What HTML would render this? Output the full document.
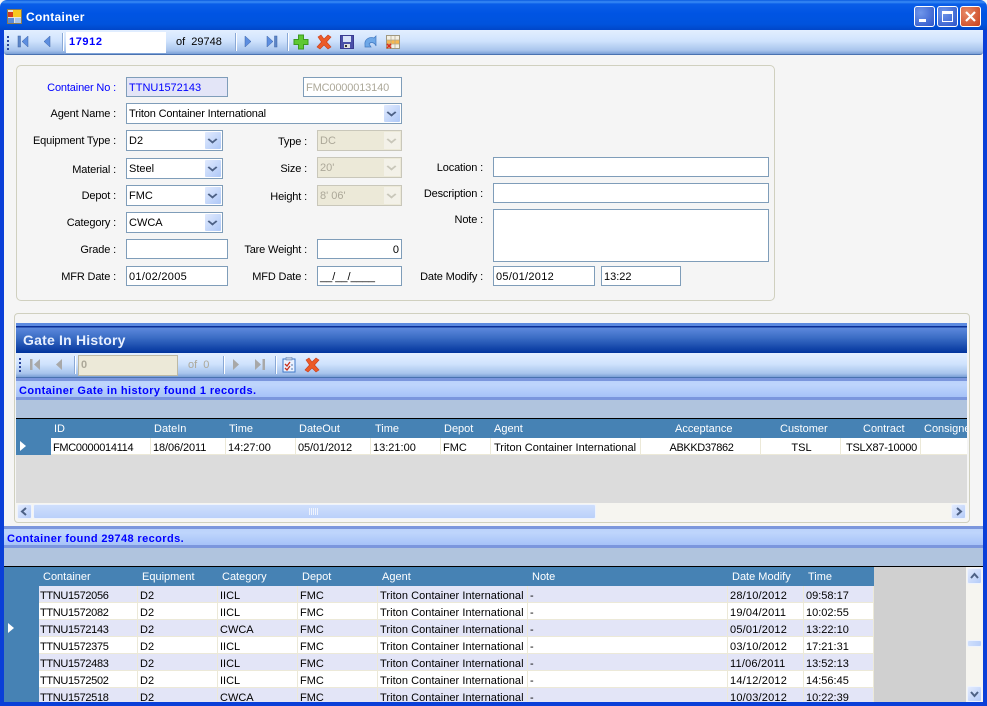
<!DOCTYPE html>
<html><head><meta charset="utf-8"><title>Container</title>
<style>
html,body{margin:0;padding:0;background:#f5f5f5}
body{width:987px;height:706px;position:relative;overflow:hidden;font:11px "Liberation Sans",sans-serif;color:#000}
div,span,svg{position:absolute;box-sizing:border-box}
.t{white-space:nowrap;line-height:14px;height:14px}
.l{white-space:nowrap;line-height:14px;height:14px;text-align:right;width:130px;margin-top:1px;letter-spacing:-.15px}
.i{background:#fff;border:1px solid #7f9db9;line-height:17px;padding:2px 0 0 2px;white-space:nowrap;overflow:hidden;height:20px}
.c{background:#fff;border:1px solid #7f9db9;line-height:17px;padding:2px 0 0 2px;white-space:nowrap;height:21px}
.c b{position:absolute;right:1px;top:1px;width:16px;height:17px;background:linear-gradient(135deg,#e1eafe,#aec8f7);border-radius:1px;display:block}
.c b:after,.d b:after{content:"";position:absolute;left:4px;top:4px;width:5px;height:5px;border-right:2px solid #4d6185;border-bottom:2px solid #4d6185;transform:scale(1,.8) rotate(45deg)}
.d{background:#ece9d8;border:1px solid #c9c7ba;color:#aca899;line-height:17px;padding-left:2px;height:21px}
.d u{position:absolute;left:2px;top:2px;right:19px;bottom:2px;background:#ece9d8;text-decoration:none}
.d b{position:absolute;right:1px;top:1px;width:16px;height:17px;background:#f3f1e8;display:block}
.d b:after{border-color:#c9c7ba}
.tb{background:linear-gradient(#e3efff 0%,#d0e3fd 45%,#a8c4ec 85%,#7a9fd6 100%)}
.st{background:linear-gradient(#bcd3fb,#bed5fc 25%,#a6c2f8 100%);border-top:3px solid #7b96dd;border-bottom:3px solid #7b96dd;color:#0000ff;font-weight:bold;line-height:15px;padding:3px 0 0 3px;letter-spacing:.4px;white-space:nowrap}
.sep{width:1px;height:18px;background:#8aa9d6;border-right:1px solid #fff;box-sizing:content-box}
.grip{width:2px;height:2px;background:#27419a;box-shadow:0 4px #27419a,0 8px #27419a,0 12px #27419a,0 -0 #27419a}
.h{color:#fff;white-space:nowrap;line-height:14px;margin-top:1px}
.cell{white-space:nowrap;overflow:hidden;line-height:20px;height:17px;border-right:1px solid #ece9d8;border-bottom:1px solid #ece9d8;padding-left:2px}
.id{letter-spacing:-.33px;padding-left:1px}
.sb{background:linear-gradient(135deg,#e3ebfe,#b4cbf8);border:1px solid #eef3fd;border-radius:2px}
</style></head><body>

<!-- Window frame -->
<div style="left:0;top:0;width:987px;height:30px;background:linear-gradient(#0a5ae0 0,#3b8cf5 2px,#0a5ee8 4px,#0054e3 14px,#0053dd 24px,#0046c8 30px);border-radius:7px 7px 0 0"></div>
<div style="left:0;top:30px;width:4px;height:676px;background:#0a3fd8"></div>
<div style="left:983px;top:30px;width:4px;height:676px;background:#0a3fd8"></div>
<div style="left:0;top:702px;width:987px;height:4px;background:#0a3fd8"></div>

<svg style="left:7px;top:9px" width="15" height="15" viewBox="0 0 15 15"><rect x=".5" y=".5" width="14" height="14" fill="#e8e4d8" stroke="#8a7a50"/><rect x="1" y="3" width="5" height="5" fill="#d63c1c"/><rect x="6" y="1" width="8" height="7" fill="#f8c820"/><rect x="1" y="9" width="6" height="5" fill="#5a8ad8"/><rect x="8" y="9" width="6" height="5" fill="#a8c4ec"/></svg>
<div class="t" style="left:26px;top:10px;color:#fff;font-weight:bold;font-size:12px;letter-spacing:.3px">Container</div>

<!-- Window buttons -->
<div style="left:914px;top:6px;width:21px;height:21px;border:1px solid #fff;border-radius:3px;background:radial-gradient(circle at 30% 30%,#6f96ea,#2c54c8)"></div>
<div style="left:919px;top:19px;width:7px;height:3px;background:#fff"></div>
<div style="left:937px;top:6px;width:21px;height:21px;border:1px solid #fff;border-radius:3px;background:radial-gradient(circle at 30% 30%,#6f96ea,#2c54c8)"></div>
<div style="left:942px;top:11px;width:11px;height:11px;border:1px solid #fff;border-top-width:3px"></div>
<div style="left:960px;top:6px;width:21px;height:21px;border:1px solid #fff;border-radius:3px;background:radial-gradient(circle at 30% 30%,#e88a68,#c8401c)"></div>
<svg style="left:964px;top:10px" width="13" height="13" viewBox="0 0 13 13"><path d="M2 2L11 11M11 2L2 11" stroke="#fff" stroke-width="2.2"/></svg>

<!-- Main toolbar -->
<div class="tb" style="left:4px;top:30px;width:979px;height:25px;border-bottom:1px solid #4a72b0;border-radius:0 0 3px 3px"></div>
<div class="grip" style="left:7px;top:36px"></div>
<svg style="left:17px;top:35px" width="14" height="14" viewBox="0 0 14 14"><rect x="1" y="1" width="2.5" height="11" fill="#5d86c8" stroke="#3d62a4" stroke-width=".5"/><path d="M11 1V12L5 6.5Z" fill="#5d8ee0" stroke="#3d62a4" stroke-width=".5"/></svg>
<svg style="left:41px;top:35px" width="12" height="14" viewBox="0 0 12 14"><path d="M9 1V12L3 6.5Z" fill="#5d8ee0" stroke="#3d62a4" stroke-width=".5"/></svg>
<div class="sep" style="left:62px;top:33px"></div>
<div style="left:66px;top:32px;width:100px;height:21px;background:#fff"></div>
<div class="t" style="left:69px;top:35px;color:#0000ff;font-weight:bold;letter-spacing:.6px">17912</div>
<div class="t" style="left:176px;top:35px">of&nbsp; 29748</div>
<div class="sep" style="left:235px;top:33px"></div>
<svg style="left:243px;top:35px" width="12" height="14" viewBox="0 0 12 14"><path d="M2 1V12L8 6.5Z" fill="#5d8ee0" stroke="#3d62a4" stroke-width=".5"/></svg>
<svg style="left:266px;top:35px" width="14" height="14" viewBox="0 0 14 14"><path d="M1 1V12L7 6.5Z" fill="#5d8ee0" stroke="#3d62a4" stroke-width=".5"/><rect x="8.5" y="1" width="2.5" height="11" fill="#5d86c8" stroke="#3d62a4" stroke-width=".5"/></svg>
<div class="sep" style="left:287px;top:33px"></div>
<svg style="left:293px;top:34px" width="16" height="16" viewBox="0 0 16 16"><path d="M5.5 1H10.5V5.5H15V10.5H10.5V15H5.5V10.5H1V5.5H5.5Z" fill="#5ec832" stroke="#3c9a20"/></svg>
<svg style="left:316px;top:34px" width="16" height="16" viewBox="0 0 16 16"><path d="M2 3L5 1L8 5L12 1L15 3L10.5 8L15 13L12 15L8 11L4 15L1 13L5.5 8Z" fill="#ec5a28" stroke="#c83c18" stroke-width=".6"/></svg>
<svg style="left:340px;top:35px" width="14" height="14" viewBox="0 0 14 14"><rect x=".5" y=".5" width="13" height="13" fill="#4a50a8" stroke="#3a3a90"/><rect x="3" y="1" width="8" height="6" fill="#d8e2f8"/><rect x="4" y="9" width="6" height="4" fill="#e0e0e0"/><rect x="5" y="10" width="2" height="2" fill="#333"/></svg>
<svg style="left:362px;top:34px" width="16" height="16" viewBox="0 0 16 16"><path d="M3 11C2 6 7 2 12 4L14 2V12C13 9 9 7 7 10L9 13H3Z" fill="#6ea8e8" stroke="#4078c0" stroke-width=".7"/></svg>
<svg style="left:386px;top:35px" width="14" height="14" viewBox="0 0 14 14"><rect x=".5" y=".5" width="13" height="13" fill="#f4f0e4" stroke="#a09880"/><rect x="1" y="5" width="12" height="4" fill="#f8b850"/><path d="M5 1V13M9 1V13M1 5H13M1 9H13" stroke="#b0a890" stroke-width=".7"/><path d="M1 9L5 13M5 9L1 13" stroke="#d8301c" stroke-width="1.6"/></svg>

<!-- Form group -->
<div style="left:16px;top:65px;width:759px;height:236px;border:1px solid #d0d0bf;border-radius:5px;background:#f5f5f5"></div>

<div class="l" style="left:-14px;top:80px;color:#0000ff">Container No :</div>
<div class="i" style="left:126px;top:77px;width:102px;background:#e3e5f7;color:#0000ff">TTNU1572143</div>
<div class="i" style="left:303px;top:77px;width:99px;color:#aca899;letter-spacing:-.15px">FMC0000013140</div>

<div class="l" style="left:-14px;top:106px">Agent Name :</div>
<div class="c" style="left:126px;top:103px;width:276px;letter-spacing:-.17px">Triton Container International<b></b></div>

<div class="l" style="left:-14px;top:133px">Equipment Type :</div>
<div class="c" style="left:126px;top:130px;width:97px">D2<b></b></div>
<div class="l" style="left:-14px;top:162px">Material :</div>
<div class="c" style="left:126px;top:158px;width:97px">Steel<b></b></div>
<div class="l" style="left:-14px;top:188px">Depot :</div>
<div class="c" style="left:126px;top:185px;width:97px">FMC<b></b></div>
<div class="l" style="left:-14px;top:215px">Category :</div>
<div class="c" style="left:126px;top:212px;width:97px">CWCA<b></b></div>
<div class="l" style="left:-14px;top:242px">Grade :</div>
<div class="i" style="left:126px;top:239px;width:102px"></div>
<div class="l" style="left:-14px;top:269px">MFR Date :</div>
<div class="i" style="left:126px;top:266px;width:102px;letter-spacing:.3px">01/02/2005</div>

<div class="l" style="left:177px;top:134px">Type :</div>
<div class="d" style="left:317px;top:130px;width:85px"><u>DC</u><b></b></div>
<div class="l" style="left:177px;top:161px">Size :</div>
<div class="d" style="left:317px;top:157px;width:85px"><u>20'</u><b></b></div>
<div class="l" style="left:177px;top:189px">Height :</div>
<div class="d" style="left:317px;top:185px;width:85px"><u>8' 06'</u><b></b></div>
<div class="l" style="left:177px;top:242px">Tare Weight :</div>
<div class="i" style="left:317px;top:239px;width:85px;text-align:right;padding-right:2px">0</div>
<div class="l" style="left:177px;top:269px">MFD Date :</div>
<div class="i" style="left:317px;top:266px;width:85px">__/__/____</div>

<div class="l" style="left:353px;top:160px">Location :</div>
<div class="i" style="left:493px;top:157px;width:276px"></div>
<div class="l" style="left:353px;top:186px">Description :</div>
<div class="i" style="left:493px;top:183px;width:276px"></div>
<div class="l" style="left:353px;top:212px">Note :</div>
<div class="i" style="left:493px;top:209px;width:276px;height:53px"></div>
<div class="l" style="left:353px;top:269px">Date Modify :</div>
<div class="i" style="left:493px;top:266px;width:102px;letter-spacing:.3px">05/01/2012</div>
<div class="i" style="left:601px;top:266px;width:80px">13:22</div>

<!-- Gate In History group -->
<div style="left:14px;top:313px;width:956px;height:210px;border:1px solid #d0d0bf;border-radius:4px;background:#f5f5f5"></div>
<div style="left:16px;top:323px;width:951px;height:30px;background:linear-gradient(#5c8ae0 0,#5c8ae0 3px,#0a2f96 3px,#0a2f96 4px,#5c88dc 5px,#3a6cc4 15px,#0d3fa4 27px,#00339c 30px)"></div>
<div class="t" style="left:23px;top:332px;color:#e8f0ff;font-size:14px;font-weight:bold;height:16px;line-height:16px;letter-spacing:.2px">Gate In History</div>
<div class="tb" style="left:16px;top:353px;width:951px;height:25px;border-bottom:1px solid #4a72b0"></div>
<div class="grip" style="left:19px;top:358px"></div>
<svg style="left:29px;top:358px" width="14" height="14" viewBox="0 0 14 14"><rect x="1" y="1" width="2.5" height="11" fill="#a8a8a8"/><path d="M11 1V12L5 6.5Z" fill="#a8a8a8"/></svg>
<svg style="left:53px;top:358px" width="12" height="14" viewBox="0 0 12 14"><path d="M9 1V12L3 6.5Z" fill="#a8a8a8"/></svg>
<div class="sep" style="left:74px;top:356px"></div>
<div style="left:78px;top:355px;width:100px;height:21px;background:#ece9d8;border:1px solid #bdb9a4"></div>
<div class="t" style="left:81px;top:358px;color:#aca899;font-weight:bold">0</div>
<div class="t" style="left:188px;top:358px;color:#aca899">of&nbsp; 0</div>
<div class="sep" style="left:223px;top:356px"></div>
<svg style="left:231px;top:358px" width="12" height="14" viewBox="0 0 12 14"><path d="M2 1V12L8 6.5Z" fill="#a8a8a8"/></svg>
<svg style="left:254px;top:358px" width="14" height="14" viewBox="0 0 14 14"><path d="M1 1V12L7 6.5Z" fill="#a8a8a8"/><rect x="8.5" y="1" width="2.5" height="11" fill="#a8a8a8"/></svg>
<div class="sep" style="left:275px;top:356px"></div>
<svg style="left:282px;top:357px" width="14" height="16" viewBox="0 0 14 16"><rect x="1" y="2" width="12" height="13" fill="#eaf2ff" stroke="#3f78c8"/><rect x="4" y="0" width="6" height="3" fill="#b8c8e0" stroke="#5878a8" stroke-width=".5"/><path d="M3 7L5 9L8 5M3 11L5 13L8 9" fill="none" stroke="#c8301c" stroke-width="1.3"/><path d="M9 8H11M9 12H11" stroke="#5878a8"/></svg>
<svg style="left:304px;top:357px" width="16" height="16" viewBox="0 0 16 16"><path d="M2 3L5 1L8 5L12 1L15 3L10.5 8L15 13L12 15L8 11L4 15L1 13L5.5 8Z" fill="#ec5a28" stroke="#c83c18" stroke-width=".6"/></svg>

<div class="st" style="left:16px;top:378px;width:951px;height:22px">Container Gate in history found 1 records.</div>
<div style="left:16px;top:400px;width:951px;height:18px;background:#b0c4de"></div>
<div style="left:16px;top:418px;width:951px;height:1px;background:#000"></div>
<div style="left:16px;top:419px;width:951px;height:19px;background:#4682b4;overflow:hidden">
<span class="h" style="left:38px;top:2px">ID</span>
<span class="h" style="left:138px;top:2px">DateIn</span>
<span class="h" style="left:213px;top:2px">Time</span>
<span class="h" style="left:283px;top:2px">DateOut</span>
<span class="h" style="left:359px;top:2px">Time</span>
<span class="h" style="left:428px;top:2px">Depot</span>
<span class="h" style="left:478px;top:2px">Agent</span>
<span class="h" style="left:659px;top:2px">Acceptance</span>
<span class="h" style="left:764px;top:2px">Customer</span>
<span class="h" style="left:847px;top:2px">Contract</span>
<span class="h" style="left:908px;top:2px">Consignee</span>
</div>
<div style="left:16px;top:438px;width:35px;height:17px;background:#4682b4"></div>
<svg style="left:20px;top:441px" width="6" height="10" viewBox="0 0 6 10"><path d="M0 0L6 5L0 10Z" fill="#fff"/></svg>
<div style="left:51px;top:438px;width:916px;height:17px;background:#fff;overflow:hidden">
<div class="cell" style="left:0;top:0;width:100px;letter-spacing:-.3px">FMC0000014114</div>
<div class="cell" style="left:100px;top:0;width:75px;letter-spacing:-.1px">18/06/2011</div>
<div class="cell" style="left:175px;top:0;width:70px">14:27:00</div>
<div class="cell" style="left:245px;top:0;width:75px;letter-spacing:-.1px">05/01/2012</div>
<div class="cell" style="left:320px;top:0;width:70px">13:21:00</div>
<div class="cell" style="left:390px;top:0;width:50px">FMC</div>
<div class="cell" style="left:440px;top:0;width:150px;padding-left:3px">Triton Container International</div>
<div class="cell" style="left:590px;top:0;width:120px;text-align:center;letter-spacing:-.4px">ABKKD37862</div>
<div class="cell" style="left:710px;top:0;width:80px;text-align:center">TSL</div>
<div class="cell" style="left:790px;top:0;width:80px;text-align:center;letter-spacing:-.25px">TSLX87-10000</div>
<div class="cell" style="left:870px;top:0;width:60px"></div>
</div>
<div style="left:16px;top:455px;width:951px;height:48px;background:#dcdcdc"></div>
<!-- h scrollbar -->
<div style="left:16px;top:503px;width:951px;height:17px;background:#f6f5f0"></div>
<div class="sb" style="left:17px;top:504px;width:15px;height:15px"></div>
<svg style="left:20px;top:507px" width="8" height="9" viewBox="0 0 8 9"><path d="M6 1L2 4.5L6 8" fill="none" stroke="#4d6185" stroke-width="2"/></svg>
<div class="sb" style="left:33px;top:504px;width:563px;height:15px;background:linear-gradient(#cfdffc,#bad0fa)"></div>
<svg style="left:309px;top:508px" width="9" height="7" viewBox="0 0 9 7"><path d="M.5 0V7M2.5 0V7M4.5 0V7M6.5 0V7M8.5 0V7" stroke="#eef3fd"/></svg>
<div class="sb" style="left:951px;top:504px;width:15px;height:15px"></div>
<svg style="left:955px;top:507px" width="8" height="9" viewBox="0 0 8 9"><path d="M2 1L6 4.5L2 8" fill="none" stroke="#4d6185" stroke-width="2"/></svg>

<!-- Bottom section -->
<div class="st" style="left:4px;top:526px;width:979px;height:22px">Container found 29748 records.</div>
<div style="left:4px;top:548px;width:979px;height:18px;background:#b0c4de"></div>
<div style="left:4px;top:566px;width:979px;height:1px;background:#000"></div>
<div style="left:4px;top:567px;width:35px;height:135px;background:#4682b4"></div>
<svg style="left:8px;top:623px" width="6" height="10" viewBox="0 0 6 10"><path d="M0 0L6 5L0 10Z" fill="#fff"/></svg>
<div style="left:39px;top:567px;width:835px;height:19px;background:#4682b4">
<span class="h" style="left:4px;top:2px">Container</span>
<span class="h" style="left:103px;top:2px">Equipment</span>
<span class="h" style="left:183px;top:2px">Category</span>
<span class="h" style="left:263px;top:2px">Depot</span>
<span class="h" style="left:343px;top:2px">Agent</span>
<span class="h" style="left:493px;top:2px">Note</span>
<span class="h" style="left:693px;top:2px">Date Modify</span>
<span class="h" style="left:769px;top:2px">Time</span>
</div>
<div style="left:874px;top:567px;width:92px;height:135px;background:#d0d0d0"></div>

<div style="left:39px;top:586px;width:835px;height:116px;overflow:hidden;background:#fff">
<div style="left:0;top:0;width:835px;height:17px;background:#e3e5f7"><div class="cell id" style="left:0;top:0;width:99px">TTNU1572056</div><div class="cell" style="left:99px;top:0;width:80px">D2</div><div class="cell" style="left:179px;top:0;width:80px">IICL</div><div class="cell" style="left:259px;top:0;width:80px">FMC</div><div class="cell" style="left:339px;top:0;width:150px;letter-spacing:.05px">Triton Container International</div><div class="cell" style="left:489px;top:0;width:200px">-</div><div class="cell" style="left:689px;top:0;width:76px;letter-spacing:.2px">28/10/2012</div><div class="cell" style="left:765px;top:0;width:70px">09:58:17</div></div>
<div style="left:0;top:17px;width:835px;height:17px;background:#fff"><div class="cell id" style="left:0;top:0;width:99px">TTNU1572082</div><div class="cell" style="left:99px;top:0;width:80px">D2</div><div class="cell" style="left:179px;top:0;width:80px">IICL</div><div class="cell" style="left:259px;top:0;width:80px">FMC</div><div class="cell" style="left:339px;top:0;width:150px;letter-spacing:.05px">Triton Container International</div><div class="cell" style="left:489px;top:0;width:200px">-</div><div class="cell" style="left:689px;top:0;width:76px;letter-spacing:.2px">19/04/2011</div><div class="cell" style="left:765px;top:0;width:70px">10:02:55</div></div>
<div style="left:0;top:34px;width:835px;height:17px;background:#e3e5f7"><div class="cell id" style="left:0;top:0;width:99px">TTNU1572143</div><div class="cell" style="left:99px;top:0;width:80px">D2</div><div class="cell" style="left:179px;top:0;width:80px">CWCA</div><div class="cell" style="left:259px;top:0;width:80px">FMC</div><div class="cell" style="left:339px;top:0;width:150px;letter-spacing:.05px">Triton Container International</div><div class="cell" style="left:489px;top:0;width:200px">-</div><div class="cell" style="left:689px;top:0;width:76px;letter-spacing:.2px">05/01/2012</div><div class="cell" style="left:765px;top:0;width:70px">13:22:10</div></div>
<div style="left:0;top:51px;width:835px;height:17px;background:#fff"><div class="cell id" style="left:0;top:0;width:99px">TTNU1572375</div><div class="cell" style="left:99px;top:0;width:80px">D2</div><div class="cell" style="left:179px;top:0;width:80px">IICL</div><div class="cell" style="left:259px;top:0;width:80px">FMC</div><div class="cell" style="left:339px;top:0;width:150px;letter-spacing:.05px">Triton Container International</div><div class="cell" style="left:489px;top:0;width:200px">-</div><div class="cell" style="left:689px;top:0;width:76px;letter-spacing:.2px">03/10/2012</div><div class="cell" style="left:765px;top:0;width:70px">17:21:31</div></div>
<div style="left:0;top:68px;width:835px;height:17px;background:#e3e5f7"><div class="cell id" style="left:0;top:0;width:99px">TTNU1572483</div><div class="cell" style="left:99px;top:0;width:80px">D2</div><div class="cell" style="left:179px;top:0;width:80px">IICL</div><div class="cell" style="left:259px;top:0;width:80px">FMC</div><div class="cell" style="left:339px;top:0;width:150px;letter-spacing:.05px">Triton Container International</div><div class="cell" style="left:489px;top:0;width:200px">-</div><div class="cell" style="left:689px;top:0;width:76px;letter-spacing:.2px">11/06/2011</div><div class="cell" style="left:765px;top:0;width:70px">13:52:13</div></div>
<div style="left:0;top:85px;width:835px;height:17px;background:#fff"><div class="cell id" style="left:0;top:0;width:99px">TTNU1572502</div><div class="cell" style="left:99px;top:0;width:80px">D2</div><div class="cell" style="left:179px;top:0;width:80px">IICL</div><div class="cell" style="left:259px;top:0;width:80px">FMC</div><div class="cell" style="left:339px;top:0;width:150px;letter-spacing:.05px">Triton Container International</div><div class="cell" style="left:489px;top:0;width:200px">-</div><div class="cell" style="left:689px;top:0;width:76px;letter-spacing:.2px">14/12/2012</div><div class="cell" style="left:765px;top:0;width:70px">14:56:45</div></div>
<div style="left:0;top:102px;width:835px;height:17px;background:#e3e5f7"><div class="cell id" style="left:0;top:0;width:99px">TTNU1572518</div><div class="cell" style="left:99px;top:0;width:80px">D2</div><div class="cell" style="left:179px;top:0;width:80px">CWCA</div><div class="cell" style="left:259px;top:0;width:80px">FMC</div><div class="cell" style="left:339px;top:0;width:150px;letter-spacing:.05px">Triton Container International</div><div class="cell" style="left:489px;top:0;width:200px">-</div><div class="cell" style="left:689px;top:0;width:76px;letter-spacing:.2px">10/03/2012</div><div class="cell" style="left:765px;top:0;width:70px">10:22:39</div></div>
</div>

<!-- v scrollbar -->
<div style="left:966px;top:567px;width:17px;height:135px;background:#f6f5f0"></div>
<div class="sb" style="left:967px;top:568px;width:15px;height:16px"></div>
<svg style="left:970px;top:572px" width="9" height="8" viewBox="0 0 9 8"><path d="M1 6L4.5 2L8 6" fill="none" stroke="#4d6185" stroke-width="2"/></svg>
<div class="sb" style="left:967px;top:640px;width:15px;height:7px;background:linear-gradient(90deg,#cfdffc,#bad0fa)"></div>
<div class="sb" style="left:967px;top:686px;width:15px;height:16px"></div>
<svg style="left:970px;top:690px" width="9" height="8" viewBox="0 0 9 8"><path d="M1 2L4.5 6L8 2" fill="none" stroke="#4d6185" stroke-width="2"/></svg>

</body></html>
